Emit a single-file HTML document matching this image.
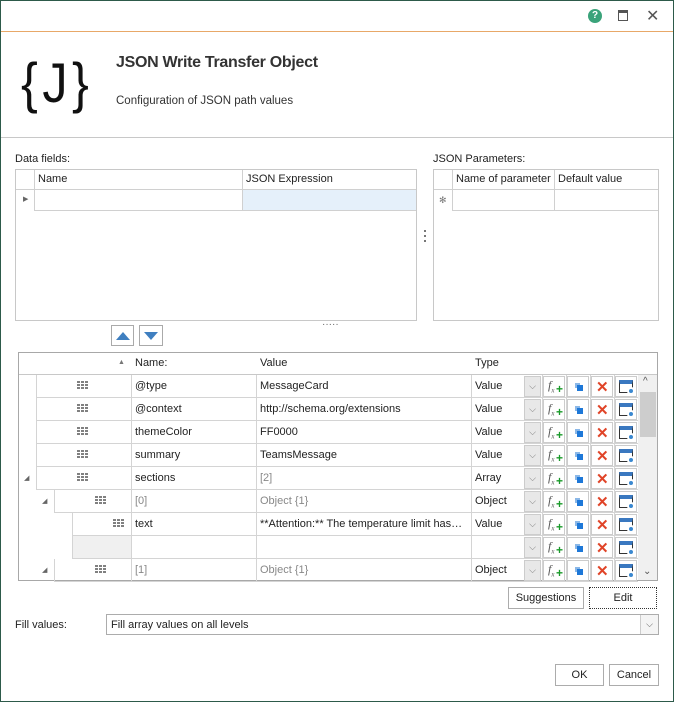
<!DOCTYPE html><html><head><style>
*{box-sizing:border-box;margin:0;padding:0}
body{width:674px;height:702px;background:#fff;font-family:"Liberation Sans",sans-serif;font-size:11px;color:#222;position:relative;overflow:hidden}
.a{position:absolute}
.b{position:absolute;border:1px solid #c8c8c8}
.t{position:absolute;white-space:nowrap}
.g{color:#888}
.btn{position:absolute;border:1px solid #acacac;background:#fff;text-align:center;line-height:20px}
</style></head><body>
<div class="a" style="left:0;top:0;width:674px;height:702px;border:1px solid #2d5a4a"></div>
<div class="a" style="left:1px;top:31px;width:672px;height:1px;background:#e8a868"></div>
<div class="a" style="left:588px;top:9px;width:14px;height:14px;border-radius:7px;background:#3aa37a;color:#fff;font-weight:bold;font-size:10px;text-align:center;line-height:14px">?</div>
<div class="a" style="left:618px;top:10px;width:10px;height:11px;border:1.5px solid #555;border-top-width:3px"></div>
<div class="t" style="left:646px;top:6px;font-size:16px;color:#555">✕</div>
<div class="t" style="left:21px;top:52px;font-size:56px;line-height:62px;font-family:'Liberation Sans',sans-serif;color:#111;letter-spacing:5px;transform:scaleX(0.9);transform-origin:left">{J}</div>
<div class="t" style="left:116px;top:54px;font-size:16px;font-weight:bold;color:#333;letter-spacing:-0.3px">JSON Write Transfer Object</div>
<div class="t" style="left:116px;top:95px;font-size:11.5px;color:#333">Configuration of JSON path values</div>
<div class="a" style="left:1px;top:137px;width:672px;height:1px;background:#c8c8c8"></div>
<div class="t" style="left:15px;top:153px">Data fields:</div>
<div class="b" style="left:15px;top:169px;width:402px;height:152px"></div>
<div class="a" style="left:16px;top:189px;width:400px;height:1px;background:#d0d0d0"></div>
<div class="a" style="left:34px;top:170px;width:1px;height:40px;background:#d0d0d0"></div>
<div class="a" style="left:242px;top:170px;width:1px;height:40px;background:#d0d0d0"></div>
<div class="a" style="left:243px;top:190px;width:173px;height:20px;background:#e5f0fa"></div>
<div class="a" style="left:34px;top:210px;width:382px;height:1px;background:#d0d0d0"></div>
<div class="t" style="left:38px;top:173px">Name</div>
<div class="t" style="left:246px;top:173px">JSON Expression</div>
<div class="t" style="left:23px;top:195px;font-size:7px;color:#666">▶</div>
<div class="a" style="left:424px;top:230px;width:2px;height:2px;background:#777"></div>
<div class="a" style="left:424px;top:235px;width:2px;height:2px;background:#777"></div>
<div class="a" style="left:424px;top:240px;width:2px;height:2px;background:#777"></div>
<div class="t" style="left:322px;top:322px;color:#666;font-size:10px;line-height:6px">·····</div>
<div class="t" style="left:433px;top:153px">JSON Parameters:</div>
<div class="b" style="left:433px;top:169px;width:226px;height:152px"></div>
<div class="a" style="left:434px;top:189px;width:224px;height:1px;background:#d0d0d0"></div>
<div class="a" style="left:452px;top:170px;width:1px;height:40px;background:#d0d0d0"></div>
<div class="a" style="left:554px;top:170px;width:1px;height:40px;background:#d0d0d0"></div>
<div class="a" style="left:452px;top:210px;width:206px;height:1px;background:#d0d0d0"></div>
<div class="t" style="left:456px;top:173px">Name of parameter</div>
<div class="t" style="left:558px;top:173px">Default value</div>
<div class="t" style="left:439px;top:195px;font-size:9px;color:#777">✻</div>
<div class="b" style="left:111px;top:325px;width:23px;height:21px;border-color:#aaa"><div class="a" style="left:4px;top:6px;width:0;height:0;border-left:7px solid transparent;border-right:7px solid transparent;border-bottom:8px solid #3f7fc0"></div></div>
<div class="b" style="left:139px;top:325px;width:24px;height:21px;border-color:#aaa"><div class="a" style="left:4px;top:6px;width:0;height:0;border-left:7px solid transparent;border-right:7px solid transparent;border-top:8px solid #3f7fc0"></div></div>
<div class="b" style="left:18px;top:352px;width:640px;height:229px;border-color:#a8a8a8"></div>
<div class="a" style="left:19px;top:374px;width:638px;height:1px;background:#c8c8c8"></div>
<div class="t" style="left:118px;top:359px;font-size:7px;color:#777">▲</div>
<div class="t" style="left:135px;top:357px">Name:</div>
<div class="t" style="left:260px;top:357px">Value</div>
<div class="t" style="left:475px;top:357px">Type</div>
<div id="g"></div>
<div class="a" style="left:638px;top:375px;width:19px;height:205px;background:#f0f0f0"></div>
<div class="a" style="left:640px;top:392px;width:16px;height:45px;background:#cdcdcd"></div>
<div class="t" style="left:643px;top:376px;font-size:10px;color:#555">^</div>
<div class="t" style="left:643px;top:566px;font-size:10px;color:#555">⌄</div>
<div class="btn" style="left:508px;top:587px;width:76px;height:22px">Suggestions</div>
<div class="btn" style="left:589px;top:587px;width:68px;height:22px;border:1px dotted #333">Edit</div>
<div class="t" style="left:15px;top:619px">Fill values:</div>
<div class="b" style="left:106px;top:614px;width:553px;height:21px;border-color:#acacac"></div>
<div class="t" style="left:111px;top:619px">Fill array values on all levels</div>
<div class="a" style="left:640px;top:615px;width:18px;height:19px;border-left:1px solid #ccc;background:#f4f4f4;color:#555;font-size:9px;text-align:center;line-height:19px">⌵</div>
<div class="btn" style="left:555px;top:664px;width:49px;height:22px">OK</div>
<div class="btn" style="left:609px;top:664px;width:50px;height:22px">Cancel</div>
<script>
var rows=[[0,'@type','MessageCard','Value',0,0],[0,'@context','http://schema.org/extensions','Value',0,0],[0,'themeColor','FF0000','Value',0,0],[0,'summary','TeamsMessage','Value',0,0],[0,'sections','[2]','Array',1,2],[1,'[0]','Object {1}','Object',1,3],[2,'text','**Attention:** The temperature limit has…','Value',0,0],[3,'','','',0,0],[1,'[1]','Object {1}','Object',1,3]];
var h='';
rows.forEach(function(r,i){var y=375+i*23,lv=r[0];var L=[36,54,72,72][lv];
if(lv==3)h+='<div class="a" style="left:'+L+'px;top:'+y+'px;width:59px;height:22px;background:#f0f0f0"></div>';
h+='<div class="a" style="left:'+L+'px;top:'+(y+22)+'px;width:'+(638-L)+'px;height:1px;background:#d4d4d4"></div>';
h+='<div class="a" style="left:'+L+'px;top:'+y+'px;width:1px;height:23px;background:#d4d4d4"></div>';
[131,256,471,542,566,590,614].forEach(function(x){h+='<div class="a" style="left:'+x+'px;top:'+y+'px;width:1px;height:23px;background:#d4d4d4"></div>'});
if(lv<3){var gx=L+41,gy=y+6;for(var a=0;a<3;a++)for(var b=0;b<3;b++)h+='<div class="a" style="left:'+(gx+b*4)+'px;top:'+(gy+a*3)+'px;width:3px;height:2px;background:#808080"></div>';}
if(r[4])h+='<div class="t" style="left:'+(L-12)+'px;top:'+(y+7)+'px;font-size:7px;color:#666">◢</div>';
h+='<div class="t'+(r[5]&1?' g':'')+'" style="left:135px;top:'+(y+5)+'px">'+r[1]+'</div>';
h+='<div class="t'+(r[5]?' g':'')+'" style="left:260px;top:'+(y+5)+'px;width:210px;overflow:hidden">'+r[2]+'</div>';
h+='<div class="t" style="left:475px;top:'+(y+5)+'px">'+r[3]+'</div>';
h+='<div class="a" style="left:524px;top:'+(y+1)+'px;width:17px;height:21px;background:#e8e8e8;border:1px solid #ccc;color:#777;font-size:9px;text-align:center;line-height:19px">⌵</div>';
var c='position:absolute;top:'+(y+1)+'px;width:22px;height:21px;border:1px solid #ccc;background:#fff;';
h+='<div style="'+c+'left:543px"><span class="t" style="left:4px;top:1px;font-style:italic;font-family:Liberation Serif;font-size:12px;color:#555">f<sub style="font-size:7px">x</sub></span><span class="t" style="left:12px;top:5px;color:#1a9a2a;font-weight:bold;font-size:12px">+</span></div>';
h+='<div style="'+c+'left:567px"><div class="a" style="left:7px;top:6px;width:5px;height:5px;background:#8bb8e8"></div><div class="a" style="left:9px;top:8px;width:6px;height:6px;background:#1e78d8"></div></div>';
h+='<div style="'+c+'left:591px"><span class="t" style="left:4px;top:1px;color:#e04428;font-size:15px;font-weight:bold">✕</span></div>';
h+='<div style="'+c+'left:615px"><div class="a" style="left:3px;top:3px;width:14px;height:13px;border:1.5px solid #333;border-top:4px solid #3a78c0"></div><div class="a" style="left:11px;top:10px;width:8px;height:8px;border-radius:4px;background:#3a88d0;border:2px solid #fff"></div></div>';
});
document.getElementById('g').outerHTML=h;
</script>
</body></html>
